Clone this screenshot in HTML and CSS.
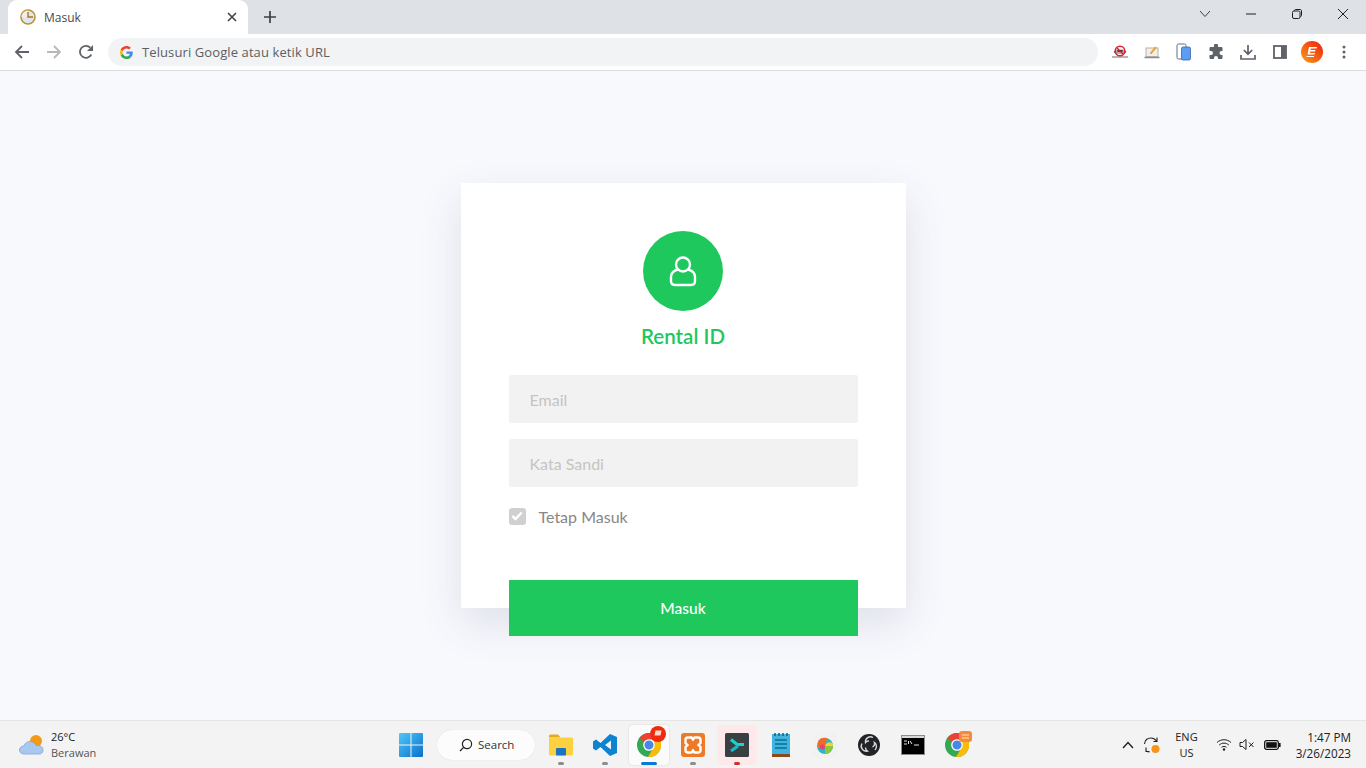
FILE: index.html
```html
<!DOCTYPE html>
<html lang="id">
<head>
    <meta charset="UTF-8">
    <meta name="viewport" content="width=device-width, initial-scale=1.0">
    <title>Masuk</title>
    <link rel="stylesheet" href="styles.css">
</head>
<body>
    <!-- browser tab strip -->
    <div class="tabstrip">
        <div class="tab">
            <svg class="tab-favicon" width="16" height="16" viewBox="0 0 16 16">
                <circle cx="8" cy="8" r="7" fill="#dfe6ee" stroke="#b8943c" stroke-width="1.600"/>
                <path d="M8 8V1.500A6.500 6.500 0 0 0 1.500 8Z" fill="#f3efe2"/>
                <path d="M8 3V8H13" fill="none" stroke="#a8742c" stroke-width="1.400"/>
            </svg>
            <span class="tab-title">Masuk</span>
            <svg class="tab-close" width="10" height="10" viewBox="0 0 10 10">
                <path d="M1 1L9 9M9 1L1 9" stroke="#45484c" stroke-width="1.700"/>
            </svg>
        </div>
        <svg class="new-tab" width="12" height="12" viewBox="0 0 12 12">
            <path d="M6 0V12M0 6H12" stroke="#3c4043" stroke-width="1.700"/>
        </svg>
        <div class="window-controls">
            <svg width="12" height="8" viewBox="0 0 12 8"><path d="M1 1L6 6.500L11 1" fill="none" stroke="#3c4043" stroke-width="1"/></svg>
            <svg width="12" height="12" viewBox="0 0 12 12"><path d="M1 6H11" stroke="#1f1f1f" stroke-width="1"/></svg>
            <svg width="12" height="12" viewBox="0 0 12 12"><rect x="1.500" y="3" width="7.500" height="7.500" rx="1.500" fill="none" stroke="#1f1f1f"/><path d="M3.500 3V2.600C3.500 1.900 4 1.500 4.600 1.500H9C9.900 1.500 10.500 2.100 10.500 3V7.500C10.500 8.100 10 8.500 9.500 8.500" fill="none" stroke="#1f1f1f"/></svg>
            <svg width="12" height="12" viewBox="0 0 12 12"><path d="M1 1L11 11M11 1L1 11" stroke="#1f1f1f" stroke-width="1"/></svg>
        </div>
    </div>

    <!-- browser toolbar -->
    <div class="toolbar">
        <svg class="nav-btn" width="16" height="16" viewBox="0 0 16 16"><path d="M15 8H2M8 2L2 8L8 14" fill="none" stroke="#5f6368" stroke-width="1.800"/></svg>
        <svg class="nav-btn" width="16" height="16" viewBox="0 0 16 16"><path d="M1 8H14M8 2L14 8L8 14" fill="none" stroke="#b6b8bb" stroke-width="1.800"/></svg>
        <svg class="nav-btn reload" width="16" height="16" viewBox="0 0 16 16"><path d="M13.300 10.500A6 6 0 1 1 12.300 3.700" fill="none" stroke="#5f6368" stroke-width="1.800"/><path d="M15 1V7H9Z" fill="#5f6368"/></svg>
        <div class="omnibox">
            <svg width="13" height="13" viewBox="0 0 48 48">
                <path fill="#ea4335" d="M24 9.500c3.500 0 6.700 1.300 9.200 3.500l6.900-6.900C35.900 2.400 30.300 0 24 0 14.600 0 6.500 5.400 2.600 13.200l8 6.200C12.500 13.600 17.800 9.500 24 9.500z"/>
                <path fill="#4285f4" d="M47 24.500c0-1.600-.1-3.100-.4-4.500H24v9h12.900c-.6 3-2.200 5.500-4.800 7.200l7.700 6C44.300 38 47 31.800 47 24.500z"/>
                <path fill="#fbbc05" d="M10.500 28.600c-.5-1.400-.8-3-.8-4.600s.3-3.200.8-4.600l-8-6.200C.9 16.500 0 20.100 0 24s.9 7.500 2.600 10.800l7.900-6.200z"/>
                <path fill="#34a853" d="M24 48c6.500 0 11.900-2.100 15.900-5.800l-7.700-6c-2.200 1.400-4.900 2.300-8.200 2.300-6.200 0-11.500-4.100-13.400-9.900l-8 6.200C6.500 42.600 14.600 48 24 48z"/>
            </svg>
            <span class="omnibox-text">Telusuri Google atau ketik URL</span>
        </div>
        <div class="toolbar-icons">
            <svg width="16" height="16" viewBox="0 0 16 16">
                <path d="M0 13H16" stroke="#6b6b6b" stroke-width="1"/>
                <path d="M1.500 8L4 5.500H12L14.500 8L12 10H4Z" fill="#555"/>
                <circle cx="8" cy="7" r="4.800" fill="#f6e9e9" fill-opacity=".6" stroke="#e02030" stroke-width="1.400"/>
                <path d="M5.500 7H10.500" stroke="#333" stroke-width="2"/>
                <path d="M4.800 3.800L11.200 10.200" stroke="#e02030" stroke-width="1.400"/>
            </svg>
            <svg width="16" height="16" viewBox="0 0 16 16">
                <rect x="2" y="4" width="12" height="8.500" fill="#f1efe9" stroke="#b4b4b4"/>
                <path d="M0.500 13.500H15.500" stroke="#8c8c8c" stroke-width="1.500"/>
                <path d="M6 9L11 2.500L12.800 3.800L7.500 10H6Z" fill="#f0a030"/>
            </svg>
            <svg width="16" height="18" viewBox="0 0 16 18">
                <rect x="1" y="1" width="9" height="15" rx="1.500" fill="#fff" stroke="#5d6f8a"/>
                <rect x="5.500" y="4" width="9" height="13" rx="1.500" fill="#5b9cf5" stroke="#3b62a8" stroke-width=".8"/>
            </svg>
            <svg width="16" height="16" viewBox="0 0 16 16"><path fill="#5f6368" d="M6 1.500a2 2 0 0 1 4 0V3h3.500a1 1 0 0 1 1 1v3h-1a2 2 0 0 0 0 4h1v3a1 1 0 0 1-1 1H10v-1a2 2 0 0 0-4 0v1H2.500a1 1 0 0 1-1-1v-3H3a2 2 0 0 0 0-4H1.500V4a1 1 0 0 1 1-1H6z"/></svg>
            <svg width="16" height="16" viewBox="0 0 16 16"><path d="M8 1V10M3.800 6L8 10.200L12.200 6M1 11V15H15V11" fill="none" stroke="#5f6368" stroke-width="1.700"/></svg>
            <svg width="14" height="14" viewBox="0 0 14 14"><rect x="1" y="1" width="12" height="12" fill="#fff" stroke="#5f6368" stroke-width="1.800"/><rect x="8" y="1" width="5" height="12" fill="#5f6368"/></svg>
            <svg width="22" height="22" viewBox="0 0 22 22">
                <defs><linearGradient id="avatar" x1="0" y1="1" x2="1" y2="0"><stop offset="0" stop-color="#f9a01b"/><stop offset="1" stop-color="#ee1c0e"/></linearGradient></defs>
                <circle cx="11" cy="11" r="11" fill="url(#avatar)"/>
                <path d="M8 6H16L15.500 7.500H9.800L9.500 9H14.500L14 10.500H9.200L8.900 12H14L13.500 13.500H6.500ZM5.500 15H13V16H5.500Z" fill="#fff"/>
            </svg>
            <svg width="4" height="14" viewBox="0 0 4 14"><circle cx="2" cy="2" r="1.500" fill="#5f6368"/><circle cx="2" cy="7" r="1.500" fill="#5f6368"/><circle cx="2" cy="12" r="1.500" fill="#5f6368"/></svg>
        </div>
    </div>

    <!-- login page -->
    <main class="page">
        <form class="login-card">
            <div class="logo-circle">
                <svg width="28" height="32" viewBox="0 0 28 32">
                    <circle cx="14" cy="9.500" r="7" fill="none" stroke="#fff" stroke-width="2.400"/>
                    <path d="M9 14.500C5 15.500 2 18 2 22V26C2 28.500 3.500 30 6 30H22C24.500 30 26 28.500 26 26V22C26 18 23 15.500 19 14.500" fill="none" stroke="#fff" stroke-width="2.400"/>
                </svg>
            </div>
            <h1 class="brand">Rental ID</h1>
            <input class="field" type="text" placeholder="Email">
            <input class="field" type="password" placeholder="Kata Sandi">
            <label class="remember">
                <span class="check">
                    <svg width="12" height="10" viewBox="0 0 12 10"><path d="M1.300 5L4.500 8L10.700 1.500" fill="none" stroke="#fff" stroke-width="2.400"/></svg>
                </span>
                Tetap Masuk
            </label>
            <button class="submit" type="button">Masuk</button>
        </form>
    </main>

    <!-- windows taskbar -->
    <footer class="taskbar">
        <div class="weather">
            <svg width="26" height="22" viewBox="0 0 26 22">
                <circle cx="17" cy="7" r="6" fill="#f59a16"/>
                <path d="M5 20C2 20 .5 18 .5 16C.5 13.500 2.500 12 5 12C6 8.500 9 7 12 7.500C15 8 16.500 10 17 11.500C20 11 24 12 24 16C24 19 22 20 20 20Z" fill="#a9c8ef" stroke="#7ea6dc" stroke-width=".8"/>
            </svg>
            <div class="weather-text">
                <div class="temp">26°C</div>
                <div class="cond">Berawan</div>
            </div>
        </div>

        <div class="task-icons">
            <div class="task-slot win-slot">
                <svg width="24" height="24" viewBox="0 0 24 24">
                    <defs><linearGradient id="winblue" x1="0" y1="0" x2="1" y2="1"><stop offset="0" stop-color="#4fc8f8"/><stop offset="1" stop-color="#0a6fc8"/></linearGradient></defs>
                    <path fill="url(#winblue)" d="M0 1a1 1 0 0 1 1-1h10.500v11.500H0zM12.500 0H23a1 1 0 0 1 1 1v10.500H12.500zM0 12.500h11.500V24H1a1 1 0 0 1-1-1zM12.500 12.500H24V23a1 1 0 0 1-1 1H12.500z"/>
                </svg>
            </div>
            <div class="search-pill">
                <svg width="14" height="14" viewBox="0 0 14 14"><circle cx="8" cy="6" r="4.600" fill="none" stroke="#222" stroke-width="1.200"/><path d="M4.600 9.400L1 13" stroke="#222" stroke-width="1.300"/></svg>
                <span>Search</span>
            </div>
            <div class="task-slot folder-slot">
                <svg width="24" height="22" viewBox="0 0 24 22">
                    <path d="M0 2a1.500 1.500 0 0 1 1.500-1.500H9l2.500 3H0z" fill="#e5a91e"/>
                    <rect x="0" y="3.500" width="24" height="18" rx="1.500" fill="#fbd13f"/>
                    <rect x="7" y="14" width="10" height="7.500" rx="1" fill="#1a74c4"/>
                </svg>
                <i class="dot"></i>
            </div>
            <div class="task-slot">
                <svg width="24" height="24" viewBox="0 0 24 24">
                    <path d="M17 1L24 4V20L17 23L7.500 14L3 17.500L0 15.500V8.500L3 6.500L7.500 10ZM18 7.500L12 12L18 16.500Z" fill="#0d84d2"/>
                </svg>
                <i class="dot"></i>
            </div>
            <div class="task-slot active-slot">
                <svg width="24" height="24" viewBox="0 0 24 24">
                    <circle cx="12" cy="12" r="12" fill="#34a853"/>
                    <path d="M12 0A12 12 0 0 1 22.400 6H12A6 6 0 0 0 6.800 9L2.500 4.700A12 12 0 0 1 12 0Z" fill="#ea4335"/>
                    <path d="M22.400 6A12 12 0 0 1 11 24L16.400 15A6 6 0 0 0 12 6Z" fill="#fbbc05"/>
                    <circle cx="12" cy="12" r="5.200" fill="#4a86e8" stroke="#fff" stroke-width="1.300"/>
                </svg>
                <svg class="badge" width="16" height="16" viewBox="0 0 16 16"><circle cx="8" cy="8" r="8" fill="#ef2a10"/><path d="M5.500 4.500H11.500L10.500 9.500H4.500Z" fill="#ffd9c8"/></svg>
                <i class="bar"></i>
            </div>
            <div class="task-slot">
                <svg width="24" height="24" viewBox="0 0 24 24">
                    <rect width="24" height="24" rx="3" fill="#ef7a26"/>
                    <path d="M7 4.500H10.500L12 6.500L13.500 4.500H17C18.500 4.500 19.500 5.500 19.500 7V10L17.500 12L19.500 14V17C19.500 18.500 18.500 19.500 17 19.500H13.500L12 17.500L10.500 19.500H7C5.500 19.500 4.500 18.500 4.500 17V14L6.500 12L4.500 10V7C4.500 5.500 5.500 4.500 7 4.500Z" fill="none" stroke="#fff" stroke-width="2.400"/>
                </svg>
                <i class="dot"></i>
            </div>
            <div class="task-slot pink-slot">
                <svg width="24" height="24" viewBox="0 0 24 24">
                    <rect width="24" height="24" rx="1.500" fill="#3a3f44"/>
                    <path d="M6 6.500L12 11.500H19" fill="none" stroke="#1fd0c8" stroke-width="3.200"/>
                    <path d="M6 18L13 13" fill="none" stroke="#19b8c8" stroke-width="3.200"/>
                </svg>
                <i class="bar red"></i>
            </div>
            <div class="task-slot">
                <svg width="18" height="24" viewBox="0 0 18 24">
                    <rect x="0" y="1" width="18" height="20" fill="#3fb4de"/>
                    <rect x="0" y="21" width="18" height="3" fill="#8a4a1c"/>
                    <path d="M3 0V3M7 0V3M11 0V3M15 0V3" stroke="#16607e" stroke-width="1.500"/>
                    <path d="M3 7H15M3 11H15M3 15H15" stroke="#0f6d92" stroke-width="1.700"/>
                </svg>
            </div>
            <div class="task-slot">
                <svg width="24" height="24" viewBox="0 0 24 24">
                    <rect width="24" height="24" rx="4" fill="#f1f1f1"/>
                    <circle cx="12" cy="13" r="8" fill="#2bb6c8"/>
                    <path d="M12 21A8 8 0 0 0 20 13H12Z" fill="#8cc63f"/>
                    <path d="M5 9C6 5 10 4 14 5C14 8 12 10 12 14L5 15Z" fill="#f06a2a"/>
                    <path d="M12 13A4.500 4.500 0 0 1 20 11L20 13Z" fill="#f5d327"/>
                    <circle cx="9.500" cy="14" r="2.500" fill="#e8407a"/>
                </svg>
            </div>
            <div class="task-slot">
                <svg width="22" height="22" viewBox="0 0 22 22">
                    <circle cx="11" cy="11" r="11" fill="#222326"/>
                    <path d="M15 3.500A5 5 0 0 0 7.500 8.500A4 4 0 0 1 11 7" fill="none" stroke="#d8d8d8" stroke-width="1.400"/>
                    <path d="M4 9.500A5 5 0 0 0 9.500 17A4 4 0 0 1 7.500 13.500" fill="none" stroke="#d8d8d8" stroke-width="1.400"/>
                    <path d="M17 16A5 5 0 0 0 16.500 8.500A4 4 0 0 1 14.500 13" fill="none" stroke="#d8d8d8" stroke-width="1.400"/>
                </svg>
            </div>
            <div class="task-slot">
                <svg width="24" height="20" viewBox="0 0 24 20">
                    <rect x=".5" y=".5" width="23" height="19" fill="#000" stroke="#8c8c8c"/>
                    <rect x="1" y="1" width="22" height="2" fill="#d8d8d8"/>
                    <path d="M3 6H6M3 9H6M7.500 6V9M9 6L11 9M13 10H18" stroke="#e6e6e6" stroke-width="1"/>
                </svg>
            </div>
            <div class="task-slot">
                <svg width="24" height="24" viewBox="0 0 24 24">
                    <circle cx="12" cy="12" r="12" fill="#34a853"/>
                    <path d="M12 0A12 12 0 0 1 22.400 6H12A6 6 0 0 0 6.800 9L2.500 4.700A12 12 0 0 1 12 0Z" fill="#ea4335"/>
                    <path d="M22.400 6A12 12 0 0 1 11 24L16.400 15A6 6 0 0 0 12 6Z" fill="#fbbc05"/>
                    <circle cx="12" cy="12" r="5.200" fill="#4a86e8" stroke="#fff" stroke-width="1.300"/>
                </svg>
                <svg class="badge small" width="13" height="11" viewBox="0 0 13 11"><rect width="13" height="11" rx="3" fill="#f58a3c"/><path d="M3 4H10M3 7H10" stroke="#ffe3cc"/></svg>
            </div>
        </div>

        <div class="tray">
            <svg width="12" height="8" viewBox="0 0 12 8"><path d="M1 7L6 1.500L11 7" fill="none" stroke="#1c1c1c" stroke-width="1.300"/></svg>
            <svg class="sync" width="18" height="18" viewBox="0 0 18 18">
                <path d="M1.500 8C2 4 5 2 8 2C10 2 12 3 13.500 5M14 1.500V5.500H10.500M3 11.500V15.500H6.500M3 15C4 15.500 5 16 6.500 16" fill="none" stroke="#222" stroke-width="1.100"/>
                <circle cx="12.500" cy="13" r="4" fill="#f7931a"/>
            </svg>
            <div class="lang"><div>ENG</div><div>US</div></div>
            <svg class="wifi" width="16" height="13" viewBox="0 0 16 13"><path d="M1 4.500C5 .8 11 .8 15 4.500M3.200 7C6 4.500 10 4.500 12.800 7M5.500 9.300C7 8.200 9 8.200 10.500 9.300" fill="none" stroke="#1c1c1c" stroke-width="1"/><circle cx="8" cy="11.500" r="1.200" fill="#1c1c1c"/></svg>
            <svg class="volume" width="16" height="13" viewBox="0 0 16 13"><path d="M1 4.500H3.500L7 1.500V11.500L3.500 8.500H1Z" fill="none" stroke="#1c1c1c"/><path d="M10 4.500L14.500 9M14.500 4.500L10 9" stroke="#1c1c1c"/></svg>
            <svg class="battery" width="17" height="10" viewBox="0 0 17 10"><rect x=".7" y=".7" width="13.600" height="8.600" rx="1.800" fill="#fff" stroke="#111" stroke-width="1.300"/><rect x="2.200" y="2.200" width="10.600" height="5.600" fill="#111"/><rect x="15" y="3" width="1.600" height="4" fill="#111"/></svg>
            <div class="clock"><div>1:47 PM</div><div>3/26/2023</div></div>
        </div>
    </footer>
</body>
</html>
```

FILE: styles.css
```css
* {
    box-sizing: border-box;
}
body {
    margin: 0;
    height: 768px;
    display: flex;
    flex-direction: column;
    overflow: hidden;
    font-family: "Open Sans", "Noto Sans", sans-serif;
    background: #f8f9fd;
}

/* browser chrome */
.tabstrip {
    height: 34px;
    flex: none;
    display: flex;
    align-items: flex-end;
    background: #dee1e6;
}
.tab {
    width: 240px;
    height: 34px;
    margin-left: 8px;
    padding: 0 11px 0 12px;
    display: flex;
    align-items: center;
    background: #fff;
    border-radius: 9px 9px 0 0;
}
.tab-title {
    margin-left: 8px;
    flex: 1;
    font-size: 12px;
    color: #45494e;
}
.new-tab {
    margin: 0 0 11px 16px;
}
.window-controls {
    margin-left: auto;
    height: 34px;
    padding: 0 17px 6px 0;
    display: flex;
    align-items: center;
    gap: 34px;
}
.toolbar {
    height: 37px;
    flex: none;
    padding-left: 14px;
    display: flex;
    align-items: center;
    background: #fff;
    border-bottom: 1px solid #dadce0;
}
.nav-btn {
    margin-right: 16px;
}
.nav-btn.reload {
    margin-right: 14px;
}
.omnibox {
    width: 990px;
    height: 28px;
    padding-left: 12px;
    display: flex;
    align-items: center;
    gap: 9px;
    background: #f1f3f4;
    border-radius: 14px;
}
.omnibox-text {
    font-size: 13px;
    letter-spacing: 0.1px;
    color: #5c5f63;
}
.toolbar-icons {
    padding-left: 6px;
    display: grid;
    grid-auto-flow: column;
    grid-auto-columns: 32px;
    align-items: center;
    justify-items: center;
}

/* login */
.page {
    flex: 1;
    display: flex;
    align-items: center;
    justify-content: center;
}
.login-card {
    width: 445px;
    height: 425px;
    padding: 48px 48px 0;
    display: flex;
    flex-direction: column;
    background: #fff;
    box-shadow: 0 15px 40px rgba(70, 75, 110, 0.14);
}
.logo-circle {
    width: 80px;
    height: 80px;
    flex: none;
    margin: 0 auto;
    display: flex;
    align-items: center;
    justify-content: center;
    border-radius: 50%;
    background: #1ec85c;
}
.brand {
    height: 28px;
    flex: none;
    margin: 11px 0 25px;
    font-family: Lato, sans-serif;
    font-size: 20.500px;
    font-weight: 600;
    line-height: 28px;
    text-align: center;
    color: #1ec85c;
}
.field {
    width: 100%;
    height: 48px;
    flex: none;
    margin-bottom: 16px;
    padding: 0 21px;
    border: none;
    outline: none;
    border-radius: 2px;
    background: #f2f2f2;
    font-family: Lato, sans-serif;
    font-size: 16px;
}
.field::placeholder {
    color: #c4c4c4;
}
.remember {
    height: 24px;
    flex: none;
    margin-top: 1px;
    display: flex;
    align-items: center;
    gap: 13px;
    font-family: Lato, sans-serif;
    font-size: 16px;
    color: #8a8585;
}
.check {
    width: 17px;
    height: 17px;
    display: flex;
    align-items: center;
    justify-content: center;
    border-radius: 3px;
    background: #d0d0d0;
}
.submit {
    width: 100%;
    height: 56px;
    flex: none;
    margin-top: 52px;
    border: none;
    background: #1ec85c;
    color: #fff;
    font-family: Lato, sans-serif;
    font-size: 15.500px;
    font-weight: 500;
}

/* taskbar */
.taskbar {
    height: 48px;
    flex: none;
    position: relative;
    display: flex;
    align-items: center;
    background: #f3f3f3;
    border-top: 1px solid #e4e4e4;
}
.weather {
    width: 388px;
    padding-left: 19px;
    display: flex;
    align-items: center;
    gap: 6px;
}
.weather-text {
    font-size: 11px;
    line-height: 16px;
}
.temp {
    color: #1a1a1a;
}
.cond {
    color: #555;
}
.task-icons {
    display: flex;
    align-items: center;
}
.task-slot {
    width: 40px;
    height: 40px;
    position: relative;
    display: flex;
    align-items: center;
    justify-content: center;
    margin-right: 4px;
    border-radius: 4px;
}
.win-slot {
    width: 46px;
    margin-right: 3px;
}
.folder-slot {
    margin-left: 6px;
}
.active-slot {
    background: #fbfbfb;
    box-shadow: 0 0 2px rgba(0, 0, 0, 0.15);
}
.pink-slot {
    background: #fde8ea;
}
.search-pill {
    width: 98px;
    height: 30px;
    padding-left: 22px;
    display: flex;
    align-items: center;
    gap: 5px;
    border-radius: 15px;
    background: #fcfcfc;
    font-size: 11.500px;
    color: #333;
    box-shadow: 0 0 1px rgba(0, 0, 0, 0.15);
}
.dot,
.bar {
    position: absolute;
    left: 50%;
    bottom: 0;
    height: 3px;
    border-radius: 2px;
    background: #8d8d8d;
}
.dot {
    width: 6px;
    margin-left: -3px;
}
.bar {
    width: 16px;
    margin-left: -8px;
    background: #0a78d4;
}
.bar.red {
    width: 6px;
    margin-left: -3px;
    background: #d32f2f;
}
.badge {
    position: absolute;
    top: 1px;
    right: 3px;
}
.badge.small {
    top: 6px;
    right: 5px;
}
.tray {
    margin-left: auto;
    padding-right: 15px;
    display: flex;
    align-items: center;
    font-size: 11px;
    line-height: 16px;
    color: #222;
}
.sync {
    margin-left: 9px;
}
.lang {
    margin: 0 18px 0 14px;
    text-align: center;
}
.volume {
    margin-left: 7px;
}
.battery {
    margin-left: 9px;
}
.clock {
    margin-left: 15px;
    font-size: 11.700px;
    text-align: right;
}
```
